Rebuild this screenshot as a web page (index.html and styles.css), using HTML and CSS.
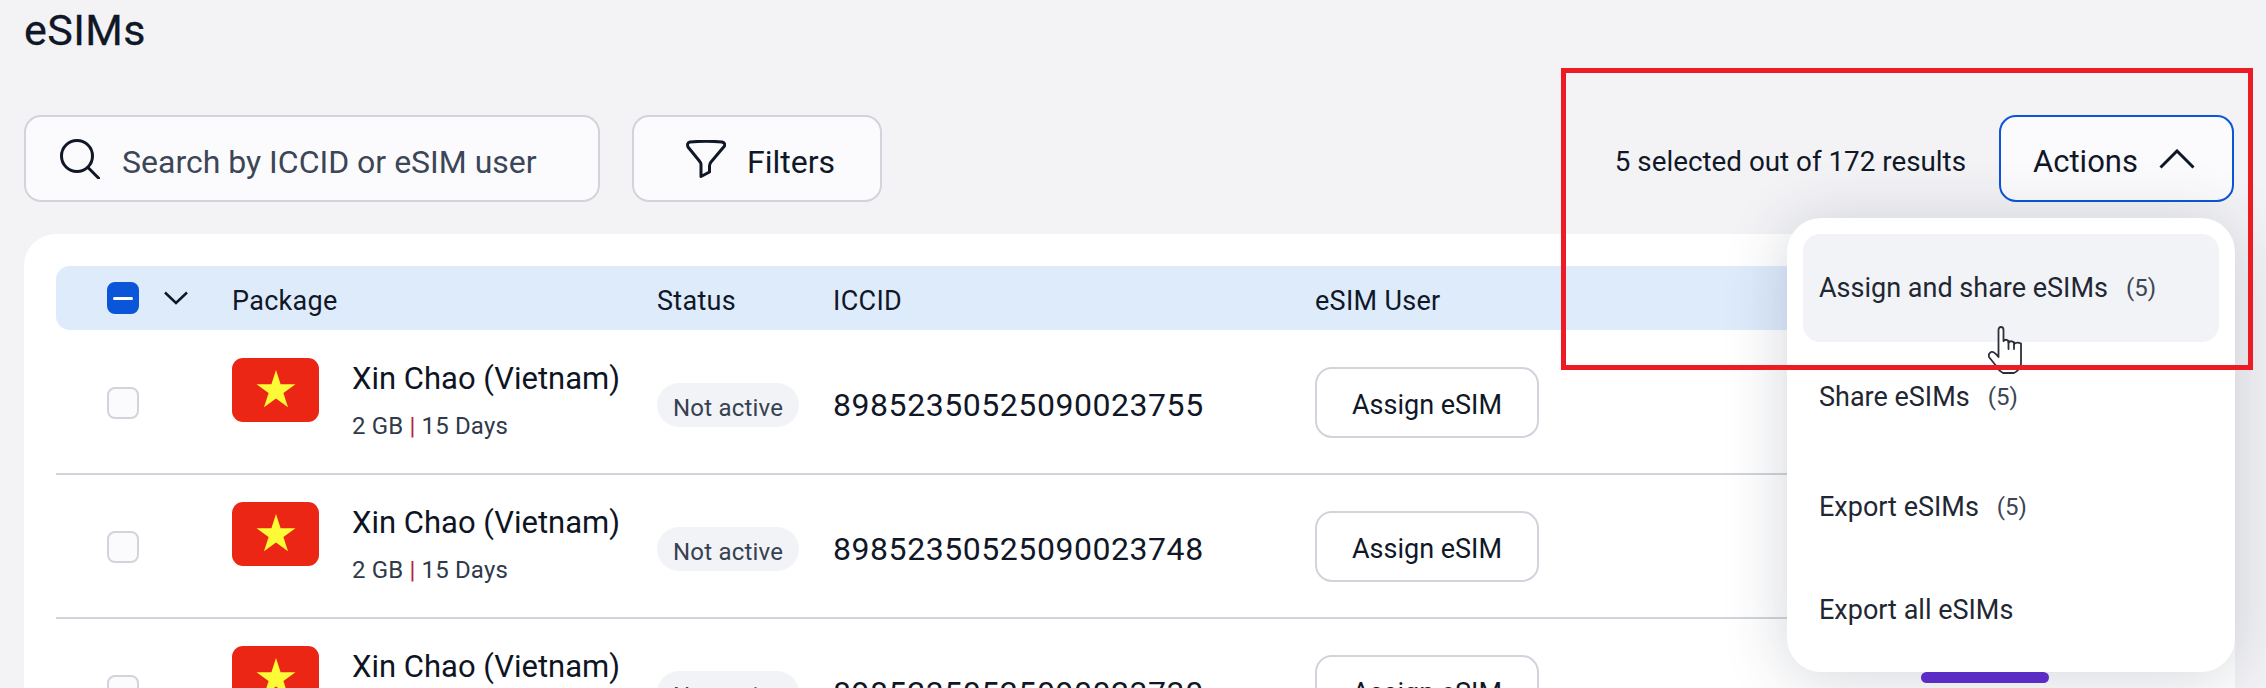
FILE: index.html
```html
<!DOCTYPE html>
<html lang="en">
<head>
<meta charset="utf-8">
<title>eSIMs</title>
<link rel="stylesheet" href="styles.css">
</head>
<body>
<div class="page">
  <h1 class="title">eSIMs</h1>
  <div class="toolbar">
    <div class="search">
      <svg class="search-icon" width="40" height="40" viewBox="0 0 40 40" fill="none" stroke="#101828" stroke-width="3" stroke-linecap="round"><circle cx="17" cy="17" r="15.5"/><path d="M28 28.500L39 39.500"/></svg>
      <span class="label">Search by ICCID or eSIM user</span>
    </div>
    <div class="filters">
      <svg width="40" height="38" viewBox="0 0 40 38" fill="none" stroke="#101828" stroke-width="3" stroke-linejoin="round"><path d="M4 2Q20 0.500 36 2Q39.500 3 38.500 6L25 22Q23.500 24 23.500 26V32L15 36.500V24Q15 23 13 20.500L2 7Q0.500 3 4 2Z"/></svg>
      <span class="label">Filters</span>
    </div>
    <div class="count label">5 selected out of 172 results</div>
    <div class="actions">
      <span class="label">Actions</span>
      <svg width="36" height="20" viewBox="0 0 36 20" fill="none" stroke="#101828" stroke-width="3"><path d="M1.500 18.500L18 2L34.500 18.500"/></svg>
    </div>
  </div>
  <div class="card">
    <div class="grid head">
      <div class="cell-check">
        <span class="box on"><span class="dash"></span></span>
        <svg width="24" height="14" viewBox="0 0 24 14" fill="none" stroke="#101828" stroke-width="2.500"><path d="M1 1.500L12 12L23 1.500"/></svg>
      </div>
      <div class="head-label">Package</div>
      <div class="head-label">Status</div>
      <div class="head-label">ICCID</div>
      <div class="head-label">eSIM User</div>
    </div>

    <div class="grid row">
      <div class="cell-check"><span class="box"></span></div>
      <div class="package">
        <svg class="flag" width="87" height="64" viewBox="0 0 87 64"><rect width="87" height="64" rx="11" fill="#ec2615"/><polygon points="44,12 48.600,26.200 63.500,26.200 51.400,35 56,49.200 44,40.400 32,49.200 36.600,35 24.500,26.200 39.400,26.200" fill="#fdfb38"/></svg>
        <div class="pack-text">
          <div class="pack-name">Xin Chao (Vietnam)</div>
          <div class="pack-sub">2 GB <span class="pipe">|</span> 15 Days</div>
        </div>
      </div>
      <div><span class="pill">Not active</span></div>
      <div class="iccid">89852350525090023755</div>
      <div><span class="assign">Assign eSIM</span></div>
    </div>

    <div class="grid row">
      <div class="cell-check"><span class="box"></span></div>
      <div class="package">
        <svg class="flag" width="87" height="64" viewBox="0 0 87 64"><rect width="87" height="64" rx="11" fill="#ec2615"/><polygon points="44,12 48.600,26.200 63.500,26.200 51.400,35 56,49.200 44,40.400 32,49.200 36.600,35 24.500,26.200 39.400,26.200" fill="#fdfb38"/></svg>
        <div class="pack-text">
          <div class="pack-name">Xin Chao (Vietnam)</div>
          <div class="pack-sub">2 GB <span class="pipe">|</span> 15 Days</div>
        </div>
      </div>
      <div><span class="pill">Not active</span></div>
      <div class="iccid">89852350525090023748</div>
      <div><span class="assign">Assign eSIM</span></div>
    </div>

    <div class="grid row">
      <div class="cell-check"><span class="box"></span></div>
      <div class="package">
        <svg class="flag" width="87" height="64" viewBox="0 0 87 64"><rect width="87" height="64" rx="11" fill="#ec2615"/><polygon points="44,12 48.600,26.200 63.500,26.200 51.400,35 56,49.200 44,40.400 32,49.200 36.600,35 24.500,26.200 39.400,26.200" fill="#fdfb38"/></svg>
        <div class="pack-text">
          <div class="pack-name">Xin Chao (Vietnam)</div>
          <div class="pack-sub">2 GB <span class="pipe">|</span> 15 Days</div>
        </div>
      </div>
      <div><span class="pill">Not active</span></div>
      <div class="iccid">89852350525090023730</div>
      <div><span class="assign">Assign eSIM</span></div>
    </div>
  </div>

  <div class="menu">
    <div class="menu-item hover">Assign and share eSIMs<span class="num">(5)</span></div>
    <div class="menu-item">Share eSIMs<span class="num">(5)</span></div>
    <div class="menu-item">Export eSIMs<span class="num">(5)</span></div>
    <div class="menu-item">Export all eSIMs</div>
  </div>
  <div class="fab"></div>
  <svg class="cursor" width="36" height="48" viewBox="0 0 36 48" fill="#fff" stroke="#2a2f3a" stroke-width="1.800" stroke-linejoin="round" stroke-linecap="round"><path d="M10.500 31V4Q10.500 1 13 1Q15.500 1 15.500 4V15Q18 12.500 20.500 15V16.500Q23 14 26 16.500V18Q29 15.500 33 17.500V38Q31 45 26 47H15Q11 45 9 41L1 31Q0 28 3 26Q6 25 10.500 31Z"/><path d="M20.500 15V23M26 16.500V23" fill="none"/></svg>
  <div class="highlight"></div>
</div>
</body>
</html>
```
FILE: styles.css
```css
* { box-sizing: border-box; }
html, body { margin: 0; padding: 0; }
body {
  background: #f3f3f6;
  font-family: Roboto, "Open Sans", sans-serif;
  color: #101828;
}
.page {
  position: relative;
  width: 2266px;
  height: 688px;
  overflow: hidden;
  padding: 0 32px 0 24px;
}
.title {
  margin: 0;
  height: 115px;
  padding-top: 6px;
  font-size: 43px;
  line-height: 48px;
  letter-spacing: 0.4px;
  font-weight: 400;
  -webkit-text-stroke: 0.3px #101828;
}
.toolbar {
  display: flex;
  align-items: center;
  height: 87px;
}
.label { margin-top: 6px; }
.search, .filters, .actions {
  display: flex;
  align-items: center;
  height: 87px;
  border: 2px solid #d1d4db;
  border-radius: 17px;
  background: #fbfbfd;
}
.search {
  width: 576px;
  padding-left: 34px;
  gap: 22px;
  font-size: 32px;
  color: #3c4656;
}
.search-icon { flex: none; margin-top: 1px; }
.filters {
  width: 250px;
  margin-left: 32px;
  padding-left: 52px;
  gap: 21px;
  font-size: 32px;
}
.count {
  margin-left: auto;
  margin-right: 33px;
  font-size: 27.8px;
}
.actions {
  width: 235px;
  padding-left: 32px;
  gap: 21px;
  border-color: #0b55d9;
  font-size: 31px;
}
.card {
  margin-top: 32px;
  width: 2211px;
  height: 600px;
  padding: 32px 0 0 32px;
  background: #fff;
  border-radius: 32px 32px 0 0;
}
.grid {
  display: grid;
  grid-template-columns: 176px 425px 176px 482px 1fr;
  align-items: center;
}
.head {
  height: 64px;
  margin-bottom: 1px;
  background: #deebfb;
  border-radius: 14px;
  font-size: 27px;
  letter-spacing: 0.3px;
}
.head-label { padding-top: 6px; }
.cell-check {
  display: flex;
  align-items: center;
  gap: 25px;
  padding-left: 51px;
}
.row .cell-check { margin-top: 1px; }
.box {
  display: flex;
  align-items: center;
  justify-content: center;
  width: 32px;
  height: 32px;
  border: 2px solid #d1d4db;
  border-radius: 8px;
  background: #fbfbfd;
}
.box.on { background: #0b55d9; border-color: #0b55d9; }
.dash { width: 20px; height: 3px; background: #fff; border-radius: 2px; }
.row {
  height: 144px;
  border-bottom: 2px solid #cfd3da;
}
.package {
  display: flex;
  align-self: start;
  padding-top: 27px;
  gap: 33px;
}
.flag { flex: none; }
.pack-text { margin-top: 1px; }
.pack-name { font-size: 31px; line-height: 40px; color: #0d1524; }
.pack-sub { font-size: 24px; line-height: 26px; margin-top: 14px; letter-spacing: 0.15px; color: #2f3a4a; }
.pipe { color: #b0243a; }
.pill {
  display: inline-flex;
  align-items: center;
  height: 44px;
  margin-top: 6px;
  padding: 6px 16px 0;
  border-radius: 22px;
  background: #f2f3f6;
  font-size: 24px;
  letter-spacing: 0.2px;
  color: #364152;
}
.iccid {
  margin-top: 5px;
  font-size: 32px;
  letter-spacing: 0.55px;
}
.assign {
  display: inline-flex;
  align-items: center;
  justify-content: center;
  width: 224px;
  height: 71px;
  margin-top: 1px;
  padding-top: 5px;
  border: 2px solid #d1d4db;
  border-radius: 17px;
  background: #fff;
  font-size: 27px;
}
.menu {
  position: absolute;
  left: 1787px;
  top: 218px;
  width: 448px;
  height: 454px;
  padding: 16px;
  background: #fff;
  border-radius: 34px;
  box-shadow: 0 6px 64px rgba(40, 50, 75, 0.2);
}
.menu-item {
  display: flex;
  align-items: center;
  height: 108px;
  padding-left: 16px;
  border-radius: 17px;
  font-size: 27px;
  color: #1f2733;
}
.menu-item + .menu-item { height: 110px; }
.menu-item:last-child { height: 96px; }
.menu-item.hover { background: #f2f3f6; }
.num { margin-left: 18px; font-size: 24px; color: #3c4656; }
.fab {
  position: absolute;
  left: 1921px;
  top: 672px;
  width: 128px;
  height: 11px;
  border-radius: 6px;
  background: #5b2dc4;
}
.cursor {
  position: absolute;
  left: 1988px;
  top: 326px;
}
.highlight {
  position: absolute;
  left: 1561px;
  top: 68px;
  width: 692px;
  height: 302px;
  border: 5px solid #ed1c24;
}
```
